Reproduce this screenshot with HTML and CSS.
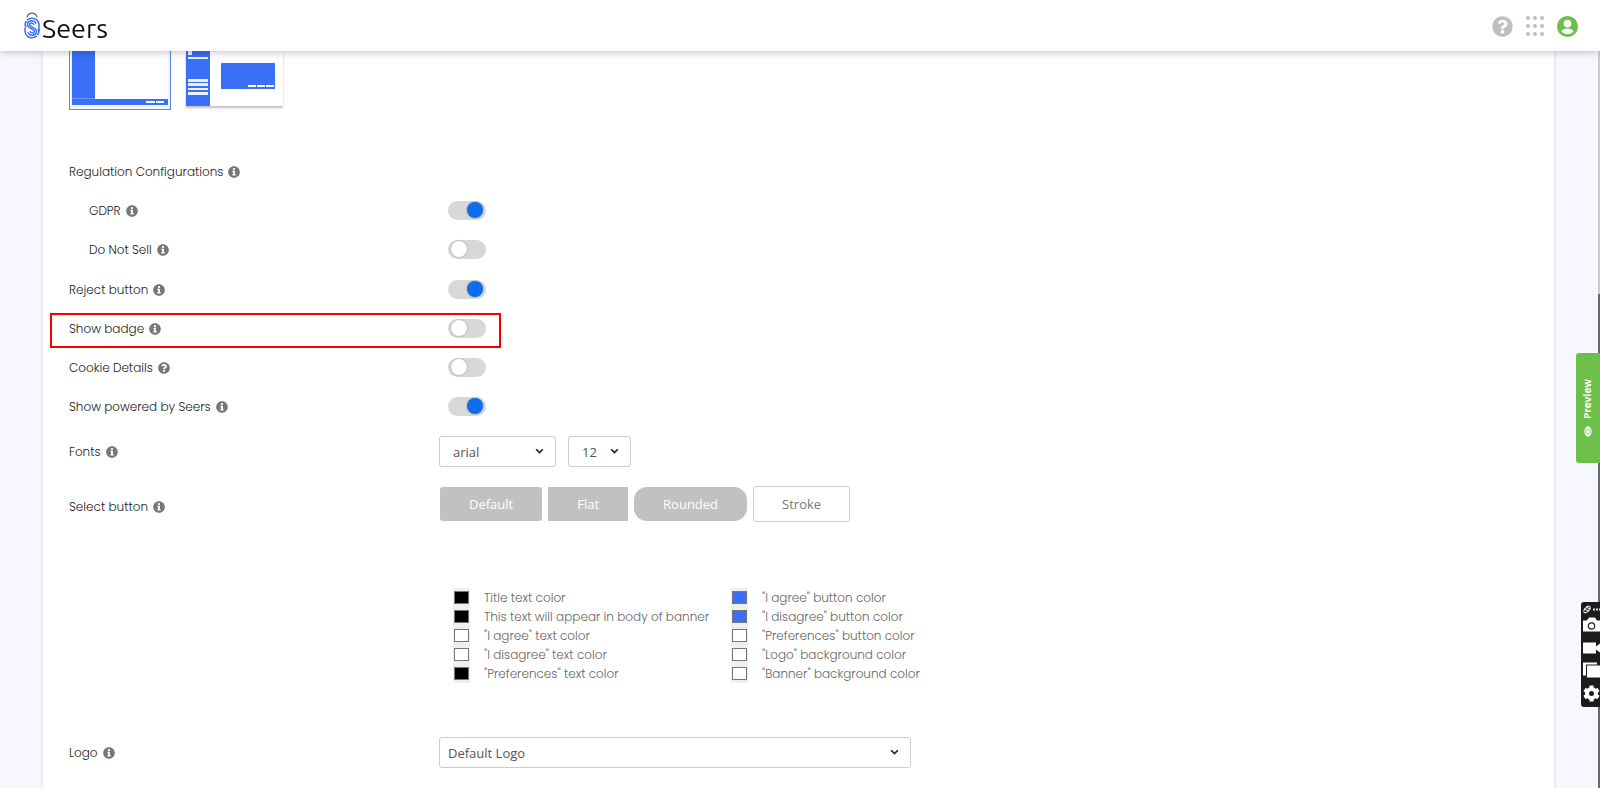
FILE: index.html
```html
<!doctype html>
<html lang="en">
<head>
<meta charset="utf-8">
<title>Seers</title>
<link rel="stylesheet" href="styles.css">
</head>
<body>
<svg class="sprite" aria-hidden="true">
  <symbol id="info" viewBox="0 0 512 512"><path d="M256 8C119.043 8 8 119.083 8 256c0 136.997 111.043 248 248 248s248-111.003 248-248C504 119.083 392.957 8 256 8zm0 80c28 0 46 19 46 44s-18 44-46 44-46-19-46-44 18-44 46-44zm70 302c0 7-5 12-12 12H198c-7 0-12-5-12-12v-34c0-7 5-12 12-12h18v-84h-18c-7 0-12-5-12-12v-34c0-7 5-12 12-12h86c7 0 12 5 12 12v130h18c7 0 12 5 12 12v34z"/></symbol>
  <symbol id="question" viewBox="0 0 512 512"><path d="M504 256c0 136.997-111.043 248-248 248S8 392.997 8 256C8 119.083 119.043 8 256 8s248 111.083 248 248zM262.655 90c-54.497 0-89.255 22.957-116.549 63.758-3.536 5.286-2.353 12.415 2.715 16.258l34.699 26.31c5.205 3.947 12.621 3.008 16.665-2.122 17.864-22.658 30.113-35.797 57.303-35.797 20.429 0 45.698 13.148 45.698 32.958 0 14.976-12.363 22.667-32.534 33.976C247.128 238.528 216 254.941 216 296v4c0 6.627 5.373 12 12 12h56c6.627 0 12-5.373 12-12v-1.333c0-28.462 83.186-29.647 83.186-106.667 0-58.002-60.165-102-116.531-102zM256 338c-25.365 0-46 20.635-46 46 0 25.364 20.635 46 46 46s46-20.636 46-46c0-25.364-20.635-46-46-46z"/></symbol>
</svg>

<header class="topbar">
  <a class="brand" href="#">
    <svg class="brand-mark" viewBox="0 0 16 27" fill="none">
      <path d="M3 5.500C3.500 2.500 5.500 1.200 8 1.200s4.500 1.300 5 4.300" stroke="#777" stroke-width="1.400"/>
      <g stroke="#3a6ff8" stroke-width="1.500" stroke-linecap="round">
        <path d="M3.500 7.800C6 5.700 10 5.700 12.500 7.600c1.800 1.400 2.500 3.300 2.500 5.400v6"/>
        <path d="M12.500 24.200c-2.500 2-6.500 2-9 .1C1.700 22.900 1 21 1 19v-3"/>
        <path d="M11.800 11.200C11 9.500 9.600 8.700 8 8.700c-2 0-3.600.5-4.300 2.300-.6 1.700 0 3.200 1.300 4.100l4.500 3c1.500 1.200.8 2.900-.8 2.900-1.200 0-1.800-.4-2.400-1.300"/>
        <path d="M4.200 20.800c.8 1.700 2.200 2.500 3.800 2.500 2 0 3.600-.5 4.300-2.300.6-1.700 0-3.200-1.300-4.100l-4.500-3c-1.500-1.200-.8-2.900.8-2.900 1.200 0 1.800.4 2.400 1.300"/>
        <path d="M2.200 9.500C.9 11.300.8 13.200 1.800 14.800"/>
        <path d="M13.800 22.500c1.300-1.800 1.400-3.700.4-5.300"/>
      </g>
    </svg>
    <span>Seers</span>
  </a>
  <nav class="top-actions">
    <a href="#" aria-label="Help"><svg class="icon-lg grey"><use href="#question"/></svg></a>
    <a href="#" aria-label="Apps">
      <svg class="icon-apps grey" viewBox="0 0 18 22"><circle cx="2" cy="3" r="2"/><circle cx="9" cy="3" r="2"/><circle cx="16" cy="3" r="2"/><circle cx="2" cy="11" r="2"/><circle cx="9" cy="11" r="2"/><circle cx="16" cy="11" r="2"/><circle cx="2" cy="19" r="2"/><circle cx="9" cy="19" r="2"/><circle cx="16" cy="19" r="2"/></svg>
    </a>
    <a href="#" aria-label="Account">
      <svg class="icon-lg" viewBox="0 0 22 22"><circle cx="11" cy="11" r="11" fill="#6cc04a"/><circle cx="11" cy="8" r="4" fill="#fff"/><path d="M4.500 16c1-2.200 4-3 6.500-3s5.500.8 6.500 3c-1.500 2-4 3-6.500 3s-5-1-6.500-3z" fill="#fff"/></svg>
    </a>
  </nav>
</header>

<main class="card">
  <div class="layouts">
    <button class="layout selected" type="button" aria-label="Side and bottom banner">
      <svg viewBox="0 0 96 54"><path d="M0 0h23v48h73v6H0z" fill="#3a6ff8"/><path d="M0 47.500h23" stroke="#6d93fa"/><path d="M74 51h9M84 51h8" stroke="#fff" stroke-width="2"/></svg>
    </button>
    <button class="layout" type="button" aria-label="Side and box banner">
      <svg viewBox="0 0 97 55"><path d="M0 0h24v55H0zM35 12h54v26H35z" fill="#3a6ff8"/><path d="M2 0h4v4H2zM2 6h20v2H2zM2 28h20v3H2zM2 32h20v3H2zM2 37h20v2H2zM2 41h20v3H2z" fill="#eef2ff"/><path d="M62 35h8M71 35h8M80 35h8" stroke="#fff" stroke-width="2"/></svg>
    </button>
  </div>

  <section class="regulation">
    <div class="row"><span class="label">Regulation Configurations <svg class="hint"><use href="#info"/></svg></span></div>
    <div class="row"><label class="label indent" for="gdpr">GDPR <svg class="hint"><use href="#info"/></svg></label><input class="toggle" type="checkbox" id="gdpr" checked></div>
    <div class="row"><label class="label indent" for="dns">Do Not Sell <svg class="hint"><use href="#info"/></svg></label><input class="toggle" type="checkbox" id="dns"></div>
  </section>
  <div class="row"><label class="label" for="reject">Reject button <svg class="hint"><use href="#info"/></svg></label><input class="toggle" type="checkbox" id="reject" checked></div>
  <div class="row highlight"><label class="label" for="badge">Show badge <svg class="hint"><use href="#info"/></svg></label><input class="toggle" type="checkbox" id="badge"></div>
  <div class="row"><label class="label" for="details">Cookie Details <svg class="hint"><use href="#question"/></svg></label><input class="toggle" type="checkbox" id="details"></div>
  <div class="row"><label class="label" for="powered">Show powered by Seers <svg class="hint"><use href="#info"/></svg></label><input class="toggle" type="checkbox" id="powered" checked></div>

  <div class="row row-fonts">
    <label class="label" for="font">Fonts <svg class="hint"><use href="#info"/></svg></label>
    <div class="fonts">
      <span class="select font-name"><select id="font"><option>arial</option></select><svg class="arrow" viewBox="0 0 8 6"><path d="M1 1l3 3 3-3"/></svg></span>
      <span class="select font-size"><select aria-label="Font size"><option>12</option></select><svg class="arrow" viewBox="0 0 8 6"><path d="M1 1l3 3 3-3"/></svg></span>
    </div>
  </div>

  <div class="row row-buttons">
    <span class="label">Select button <svg class="hint"><use href="#info"/></svg></span>
    <div class="buttons">
      <button class="btn" type="button">Default</button>
      <button class="btn flat" type="button">Flat</button>
      <button class="btn rounded" type="button">Rounded</button>
      <button class="btn stroke" type="button">Stroke</button>
    </div>
  </div>

  <div class="colors">
    <div>
      <label class="color"><input type="color" value="#000000">Title text color</label>
      <label class="color"><input type="color" value="#000000">This text will appear in body of banner</label>
      <label class="color"><input type="color" value="#ffffff">"I agree" text color</label>
      <label class="color"><input type="color" value="#ffffff">"I disagree" text color</label>
      <label class="color"><input type="color" value="#000000">"Preferences" text color</label>
    </div>
    <div>
      <label class="color"><input type="color" value="#3b6ef8">"I agree" button color</label>
      <label class="color"><input type="color" value="#3b6ef8">"I disagree" button color</label>
      <label class="color"><input type="color" value="#ffffff">"Preferences" button color</label>
      <label class="color"><input type="color" value="#ffffff">"Logo" background color</label>
      <label class="color"><input type="color" value="#ffffff">"Banner" background color</label>
    </div>
  </div>

  <div class="row">
    <label class="label" for="logo">Logo <svg class="hint"><use href="#info"/></svg></label>
    <span class="select logo-select"><select id="logo"><option>Default Logo</option></select><svg class="arrow" viewBox="0 0 8 6"><path d="M1 1l3 3 3-3"/></svg></span>
  </div>
</main>

<div class="scrollbar"></div>

<button class="preview" type="button">
  <svg viewBox="0 0 8 12"><path d="M4 0c5.300 2 5.300 10 0 12-5.300-2-5.300-10 0-12z" fill="#fff"/><circle cx="4" cy="6" r="2.600" fill="none" stroke="#6cc04a" stroke-width=".8"/></svg>
  Preview
</button>

<div class="recorder">
  <svg viewBox="0 0 19 104">
    <g fill="none" stroke="#ddd" stroke-width="1.200"><ellipse cx="6" cy="7" rx="4" ry="2" transform="rotate(-45 6 7)"/><path d="M3 6l5 3M5 4l4 3"/></g>
    <path d="M12 6h2v2h-2zM15 6h2v2h-2zM18 6h1v2h-1z" fill="#ddd"/>
    <path d="M2 18h4l2-3h6l2 3h3v11H2z" fill="#fff"/><circle cx="10.500" cy="23.500" r="3.200" fill="none" stroke="#1c1c1c" stroke-width="1.200"/>
    <path d="M2 40h13v4l4-3v9l-4-3v4H2z" fill="#fff"/>
    <path d="M2 60h14v2H5v11H2z" fill="#fff"/><path d="M6 63h13v12H6z" fill="#fff"/>
    <circle cx="10.500" cy="91" r="4.500" fill="none" stroke="#fff" stroke-width="4"/>
    <path d="M10.500 83v3M10.500 96v3M3.500 87l3 2M14.500 93l3 2M3.500 95l3-2M14.500 89l3-2" stroke="#fff" stroke-width="4"/>
  </svg>
</div>
</body>
</html>
```

FILE: styles.css
```css
*, *::before, *::after { box-sizing: border-box; }
html, body { height: 100%; }
body {
  margin: 0;
  display: flex;
  flex-direction: column;
  overflow: hidden;
  background: #f6f7ff;
  color: #1c1c22;
  font: 300 12px/18px Poppins, Inter, sans-serif;
}
svg { display: block; }
a { color: inherit; text-decoration: none; }
.sprite { position: absolute; width: 0; height: 0; }

/* header */
.topbar {
  position: relative;
  z-index: 2;
  flex: none;
  display: flex;
  align-items: center;
  justify-content: space-between;
  height: 51px;
  padding: 0 22px 0 24px;
  background: #fff;
  box-shadow: 0 1px 8px rgba(0, 0, 0, .25);
}
.brand {
  display: flex;
  align-items: center;
  gap: 2px;
  color: #111;
  font: 27px/32px Ubuntu, "Noto Sans", sans-serif;
}
.brand span { padding-top: 4px; }
.brand-mark { width: 16px; height: 27px; }
.top-actions { display: flex; align-items: center; gap: 13px; padding-top: 1px; }
.icon-lg { width: 21px; height: 21px; }
.icon-apps { width: 18px; height: 22px; }
.grey { fill: #bfbfbf; }

/* settings card */
.card {
  flex: 1 0 auto;
  margin: 0 46px 0 43px;
  padding: 0 26px;
  background: #fff;
  box-shadow: 0 0 4px rgba(0, 0, 0, .15);
}
.layouts { display: flex; align-items: flex-start; gap: 15px; height: 101px; }
.layout {
  padding: 0;
  border: 0;
  background: #fff;
  box-shadow: 0 2px 2px rgba(0, 0, 0, .25);
}
.layout svg { width: 97px; height: 55px; }
.selected {
  padding: 0 2px 4px;
  border: 1px solid #5b84f3;
  border-top: 0;
  background: #f3f6ff;
  box-shadow: none;
}
.selected svg { width: 96px; height: 54px; background: #fff; }

.regulation { padding-bottom: 1px; }
.row {
  display: grid;
  grid-template-columns: 370px 1fr;
  align-items: center;
  height: 39px;
}
.label { display: flex; align-items: center; gap: 5px; }
.indent { padding-left: 20px; }
.hint { width: 12px; height: 12px; fill: #777; }

.highlight { position: relative; }
.highlight::after {
  content: "";
  position: absolute;
  top: 4px;
  left: -19px;
  width: 451px;
  height: 35px;
  border: 2px solid #f40000;
  pointer-events: none;
}

.toggle {
  appearance: none;
  width: 38px;
  height: 19px;
  margin: 0 0 0 9px;
  padding: 1px 3px;
  border-radius: 10px;
  background: #d8d8d8;
}
.toggle::before {
  content: "";
  display: block;
  width: 16px;
  height: 16px;
  border-radius: 50%;
  background: #fff;
  box-shadow: 0 0 2px rgba(0, 0, 0, .35);
}
.toggle:checked::before { margin-left: auto; background: #0d6eed; }

/* selects */
.row-fonts { height: 51px; }
.fonts { display: flex; gap: 12px; }
.select { display: grid; align-items: center; }
.select select, .arrow { grid-area: 1 / 1; }
.select select {
  appearance: none;
  width: 100%;
  height: 31px;
  padding: 0 13px;
  border: 1px solid #ccc;
  border-radius: 3px;
  background: #fff;
  color: #555;
  font: 13px/20px "Open Sans", sans-serif;
}
.arrow {
  justify-self: end;
  width: 9px;
  height: 7px;
  margin-right: 12px;
  fill: none;
  stroke: #222;
  stroke-width: 1.5;
  pointer-events: none;
}
.font-name { width: 117px; }
.font-size { width: 63px; }
.logo-select { width: 472px; }
.logo-select select { padding: 0 8px; }

.row-buttons { height: 54px; }
.row-buttons .label { padding-top: 6px; }
.buttons { display: flex; align-items: center; gap: 6px; padding-left: 1px; }
.btn {
  height: 34px;
  padding: 0 29px;
  border: 0;
  border-radius: 3px;
  background: #c1c1c1;
  color: #fff;
  font: 13px/20px "Open Sans", sans-serif;
}
.flat { border-radius: 0; }
.rounded { border-radius: 13px; }
.stroke { height: 36px; padding: 0 28px; border: 1px solid #ccc; background: #fff; color: #777; }

/* colour pickers */
.colors {
  display: grid;
  grid-template-columns: 278px 1fr;
  margin: 57px 0 50px 384px;
  color: #666;
}
.color { display: flex; align-items: center; gap: 14px; height: 19px; }
.color input {
  appearance: none;
  width: 17px;
  height: 19px;
  padding: 3px 1px;
  border: 0;
  background: #efefef;
}
.color input::-webkit-color-swatch-wrapper { padding: 0; }
.color input::-webkit-color-swatch { border: 1px solid #777; border-radius: 0; }

/* things pinned to the right edge */
.scrollbar {
  position: fixed;
  z-index: 1;
  top: 51px;
  right: 0;
  bottom: 0;
  width: 2px;
  background: linear-gradient(#ccc 243px, #686868 0);
}
.preview {
  position: fixed;
  z-index: 3;
  top: 353px;
  right: 0;
  display: flex;
  align-items: center;
  justify-content: center;
  gap: 7px;
  width: 24px;
  height: 110px;
  padding: 0;
  border: 0;
  border-radius: 3px 0 0 3px;
  background: #6cc04a;
  color: #fff;
  font: 600 10px/14px Poppins, Inter, sans-serif;
  writing-mode: sideways-lr;
}
.preview svg { width: 8px; height: 11px; }
.recorder {
  position: fixed;
  z-index: 3;
  top: 602px;
  right: 0;
  border-radius: 3px 0 0 3px;
  background: #1c1c1c;
}
.recorder svg { width: 19px; height: 105px; }
```
